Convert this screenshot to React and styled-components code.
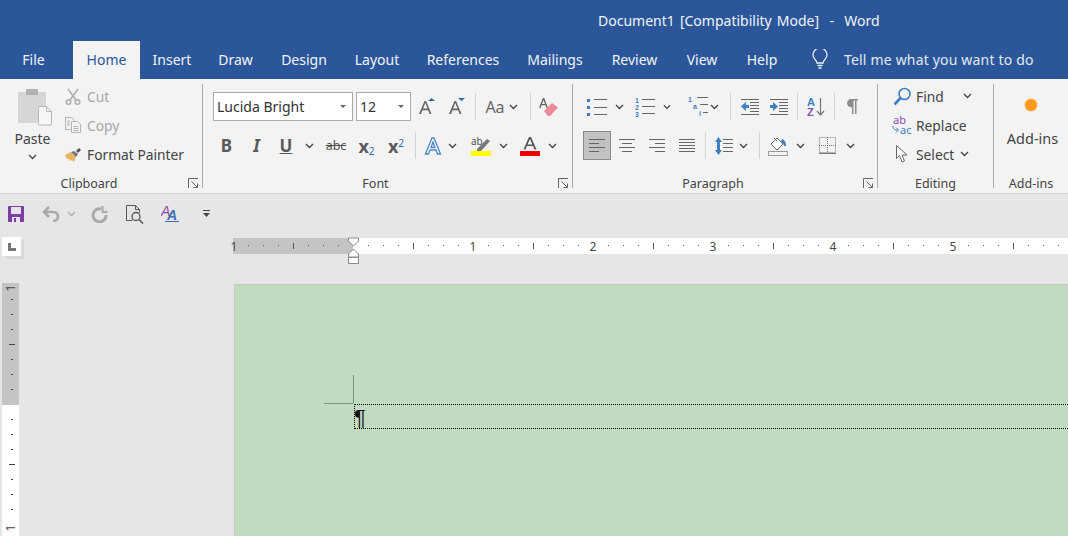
import styled, { createGlobalStyle } from "styled-components";

const Global = createGlobalStyle`
  html, body { margin: 0; padding: 0; overflow: hidden; background: #e6e6e6; }
  * { box-sizing: border-box; }
`;

const Window = styled.div`
  width: 1068px;
  height: 536px;
  overflow: hidden;
  display: flex;
  flex-direction: column;
  background: #e6e6e6;
  color: #444;
  font-family: "Noto Sans", "Open Sans", sans-serif;
  font-size: 14px;
`;

const TitleBar = styled.div`
  height: 41px;
  flex: none;
  display: flex;
  align-items: center;
  padding-left: 598px;
  background: #2b579a;
  color: #f1f4f9;
  white-space: pre;
  word-spacing: 1.5px;
`;

const TabBar = styled.div`
  height: 38px;
  flex: none;
  display: flex;
  background: #2b579a;
`;

const Tab = styled.div`
  width: ${(p) => p.$w}px;
  margin-right: ${(p) => p.$mr || 0}px;
  display: flex;
  align-items: center;
  justify-content: center;
  padding-bottom: 1px;
  background: ${(p) => (p.$active ? "#f3f3f3" : "transparent")};
  color: ${(p) => (p.$active ? "#2b579a" : "#f1f4f9")};
`;

const TellMe = styled.div`
  display: flex;
  align-items: center;
  gap: 16px;
  margin-left: 20px;
  color: #e3e8f1;
  white-space: nowrap;
  letter-spacing: 0.18px;
  padding-bottom: 2px;
`;

const Ribbon = styled.div`
  height: 115px;
  flex: none;
  display: flex;
  padding-top: 5px;
  background: #f3f3f3;
  border-bottom: 1px solid #d2d2d2;
`;

const Group = styled.div`
  width: ${(p) => p.$w}px;
  height: 104px;
  flex: none;
  display: flex;
  flex-direction: column;
  border-right: ${(p) => (p.$last ? "0" : "1px solid #a9a9a9")};
`;

const GroupBody = styled.div`
  flex: 1;
  display: flex;
  flex-direction: ${(p) => (p.$col ? "column" : "row")};
  gap: ${(p) => p.$gap || 0}px;
  padding: ${(p) => p.$pt || 0}px 0 0 ${(p) => p.$pl || 0}px;
`;

const GroupFoot = styled.div`
  height: 16px;
  margin-bottom: -3px;
  display: flex;
  align-items: center;
  font-size: 12.5px;
`;

const GroupLabel = styled.div`
  flex: 1;
  text-align: center;
`;

const Launcher = styled.div`
  width: 24px;
  display: flex;
  justify-content: flex-end;
  padding-right: 3px;
`;

const PasteCol = styled.div`
  width: 65px;
  flex: none;
  display: flex;
  flex-direction: column;
  align-items: center;
  padding-top: 4px;
`;

const PasteText = styled.div`
  margin: 3px 0 5px;
  line-height: 20px;
`;

const SmallCol = styled.div`
  display: flex;
  flex-direction: column;
  gap: 5px;
`;

const SmallRow = styled.div`
  height: 24px;
  display: flex;
  align-items: center;
  font-size: 13.8px;
  color: ${(p) => (p.$off ? "#a6a6a6" : "#444")};
  white-space: nowrap;
`;

const SmallIcon = styled.div`
  width: ${(p) => p.$w}px;
  flex: none;
  display: flex;
  justify-content: ${(p) => (p.$start ? "flex-start" : "center")};
  padding-right: ${(p) => (p.$start ? 0 : 3)}px;
`;

const Row = styled.div`
  height: 29px;
  display: flex;
  align-items: center;
`;

const Combo = styled.div`
  width: ${(p) => p.$w}px;
  height: 29px;
  margin-right: ${(p) => p.$mr || 0}px;
  display: flex;
  align-items: center;
  justify-content: space-between;
  padding: 0 6px 0 3px;
  background: #fff;
  border: 1px solid #ababab;
  color: #333;
  white-space: nowrap;
`;

const ComboArrow = styled.span`
  width: 0;
  height: 0;
  border-left: 3px solid transparent;
  border-right: 3px solid transparent;
  border-top: 3px solid #666;
`;

const Tool = styled.div`
  width: ${(p) => p.$w}px;
  height: 29px;
  flex: none;
  margin-left: ${(p) => p.$ml || 0}px;
  display: flex;
  align-items: center;
  justify-content: center;
  background: ${(p) => (p.$on ? "#c2c2c2" : "transparent")};
  border: ${(p) => (p.$on ? "1px solid #8a8a8a" : "0")};
`;

const FaceLetter = styled.span`
  font-size: 17px;
  color: #5a5a5a;
  font-weight: 700;
  font-style: ${(p) => (p.$i ? "italic" : "normal")};
  text-decoration: ${(p) => (p.$u ? "underline" : "none")};
`;

const CaseLetter = styled.span`
  font-size: 16px;
  color: #666;
`;

const Strike = styled.span`
  font-size: 12.5px;
  color: #555;
  text-decoration: line-through;
`;

const Script = styled.span`
  font-size: 18px;
  font-weight: 700;
  color: #5a5a5a;
  line-height: 20px;
  sub, sup { font-size: 10px; font-weight: 400; color: #2b6cb0; line-height: 0; }
  sub { vertical-align: -2px; }
  sup { vertical-align: 6px; }
`;

const Sep = styled.div`
  width: 1px;
  height: ${(p) => p.$h || 27}px;
  flex: none;
  margin-left: ${(p) => p.$ml || 0}px;
  background: #d4d4d4;
`;

const AddIns = styled.div`
  flex: 1;
  display: flex;
  flex-direction: column;
  align-items: center;
  padding-top: 15px;
`;

const Dot = styled.div`
  width: 12px;
  height: 12px;
  border-radius: 50%;
  background: #ff9a1e;
  box-shadow: 0 0 2px #ffb255;
`;

const AddInsText = styled.div`
  margin: 17px 0 0 3px;
  line-height: 20px;
  font-size: 14.5px;
`;

const Qat = styled.div`
  height: 40px;
  flex: none;
  display: flex;
  align-items: center;
  padding-left: 7px;
`;

const RulerRow = styled.div`
  display: flex;
  flex: none;
  padding-top: 3px;
  padding-left: 2px;
`;

const Corner = styled.div`
  width: 19px;
  height: 19px;
  flex: none;
  display: flex;
  align-items: center;
  justify-content: center;
  background: #fff;
  box-shadow: 3px 3px 0 #d9d9d9;
`;

const HRulerBox = styled.div`
  margin: 1px 0 0 212px;
  width: 835px;
  height: 26px;
  flex: none;
`;

const DocRow = styled.div`
  display: flex;
  flex: 1;
  min-height: 0;
  margin-top: 19px;
  padding-left: 2px;
`;

const VRulerBox = styled.div`
  width: 17px;
  flex: none;
`;

const Page = styled.div`
  position: relative;
  flex: 1;
  margin: 1px 0 0 215px;
  padding: 119px 0 0 119px;
  background: #c0dbbf;
  border-top: 1px solid #c4c8c4;
  border-left: 1px solid #c4c8c4;
`;

const CropV = styled.div`
  position: absolute;
  left: 118px;
  top: 90px;
  width: 1px;
  height: 28px;
  background: #7f8f7f;
`;

const CropH = styled.div`
  position: absolute;
  left: 89px;
  top: 118px;
  width: 29px;
  height: 1px;
  background: #7f8f7f;
`;

const TextLine = styled.div`
  height: 25px;
  display: flex;
  border: 1px dotted #000;
  border-right: 0;
  overflow: hidden;
`;

const Pilcrow = styled.span`
  margin-left: -1px;
  font-family: "Liberation Sans", sans-serif;
  font-size: 22px;
  line-height: 25px;
  color: #111;
`;

const Chev = ({ c = "#444" }) => (
  <svg width="9" height="6" viewBox="0 0 9 6"><path d="M1 1l3.5 3.5L8 1" fill="none" stroke={c} strokeWidth="1.3" /></svg>
);

const LauncherIcon = () => (
  <svg width="11" height="11" viewBox="0 0 11 11" fill="none" stroke="#666">
    <path d="M.5 10V.5H10M9.5 9.5L3.5 3.5M9.5 5.5v4h-4" />
  </svg>
);

const Lines = ({ x, ys, w, c = "#666" }) => ys.map((y, i) => (
  <rect key={i} x={x} y={y} width={Array.isArray(w) ? w[i] : w} height="1" fill={c} />
));

const PasteIcon = () => (
  <svg width="36" height="38" viewBox="0 0 36 38" style={{ marginLeft: 7 }}>
    <rect x="0" y="4" width="28" height="31" rx="1" fill="#d8d5d5" />
    <rect x="8" y="1" width="12" height="6" rx="1" fill="#b5b2b2" />
    <path d="M20.5 18.500h8l5 5v13.500h-13z" fill="#f6f6f6" stroke="#b8b8b8" />
    <path d="M28.500 18.500v5h5" fill="none" stroke="#b8b8b8" />
  </svg>
);

const CutIcon = () => (
  <svg width="16" height="17" viewBox="0 0 16 17" fill="none" stroke="#b0b0b0" strokeWidth="1.6">
    <path d="M3 1l8 11M13 1L5 12" /><circle cx="3.500" cy="14" r="2.300" /><circle cx="12.500" cy="14" r="2.300" />
  </svg>
);

const CopyIcon = () => (
  <svg width="17" height="16" viewBox="0 0 17 16" fill="#f3f3f3" stroke="#b5b5b5">
    <path d="M.5.5h6l3 3v9h-9z" /><path d="M6.500 4.500h6l3 3v8h-9z" />
    <path d="M8.500 9.500h5M8.500 11.500h5M8.500 13.500h5M2 4h3M2 6h3M2 8h3" />
  </svg>
);

const PainterIcon = () => (
  <svg width="18" height="15" viewBox="0 0 18 15">
    <path d="M0 8l6-3 5 5-2 5-2-2-2 1-1-2-2 0z" fill="#e8b565" />
    <path d="M6 5l5 5 2-3-4-3z" fill="#777" />
    <path d="M11 4l3-3 2 2-3 3z" fill="#555" />
  </svg>
);

const GrowIcon = ({ down }) => (
  <svg width="20" height="20" viewBox="0 0 20 20">
    <path d="M1 17L6.500 4h1.600L13.500 17h-1.900l-1.500-3.800H4.500L3 17zM5.100 11.600h4.400L7.300 6z" fill="#666" />
    <path d={down ? "M10 1h7l-3.500 3z" : "M10 4h7l-3.500-3z"} fill="#2b6cb0" />
  </svg>
);

const EraserIcon = () => (
  <svg width="20" height="20" viewBox="0 0 20 20">
    <path d="M0 11L3.800 1h1.400L9 11H7.500l-1-2.800h-4L1.500 11zM3 7h3L4.500 3z" fill="#666" />
    <path d="M5 14l8-8 6 4.500-8 8.500H9z" fill="#ea8a96" />
  </svg>
);

const TextEffect = () => (
  <svg width="18" height="18" viewBox="0 0 18 18">
    <path d="M1.500 17L8 1h2l6.500 16h-3l-1.500-4H6l-1.500 4zM7 10.500h4L9 5z" fill="#fff" stroke="#4a86c8" strokeWidth="1.300" />
  </svg>
);

const HighlightIcon = () => (
  <svg width="21" height="20" viewBox="0 0 21 20">
    <text x="0" y="9" fontFamily="Noto Sans, sans-serif" fontSize="10" fill="#555">ab</text>
    <path d="M6 13L16 3l3 2-9 10-4 0z" fill="#777" />
    <rect x="0" y="15" width="20" height="5" fill="#ffff00" />
  </svg>
);

const ColorIcon = () => (
  <svg width="20" height="20" viewBox="0 0 20 20">
    <path d="M3.500 13.500L9 1h2l5.500 12.500h-2l-1.400-3.500H6.900l-1.400 3.500zM7.600 8.500h4.800L10 3z" fill="#555" />
    <rect x="0" y="15" width="20" height="5" fill="#f00000" />
  </svg>
);

const Blue = "#3f7fc1";

const BulletIcon = () => (
  <svg width="20" height="18" viewBox="0 0 20 18">
    {[2, 9, 16].map((y) => <rect key={y} x="0" y={y - 1} width="3" height="3" fill={Blue} />)}
    <Lines x={7} ys={[1, 9, 16]} w={13} />
  </svg>
);

const NumberIcon = () => (
  <svg width="20" height="20" viewBox="0 0 20 20" fontFamily="Liberation Sans, sans-serif" fontSize="7" fontWeight="700" fill={Blue}>
    <text x="0" y="6">1</text><text x="0" y="13">2</text><text x="0" y="20">3</text>
    <Lines x={7} ys={[2, 9, 16]} w={13} />
  </svg>
);

const MultiIcon = () => (
  <svg width="20" height="21" viewBox="0 0 20 21" fontFamily="Liberation Sans, sans-serif" fontSize="7" fontWeight="700" fill={Blue}>
    <text x="0" y="6">1</text><text x="5" y="13">a</text><text x="11" y="20">i</text>
    <Lines x={9} ys={[1]} w={11} /><Lines x={12} ys={[8]} w={8} /><Lines x={15} ys={[16]} w={5} />
  </svg>
);

const IndentIcon = ({ right }) => (
  <svg width="18" height="16" viewBox="0 0 18 16">
    <Lines x={0} ys={[0, 15]} w={18} />
    <Lines x={9} ys={[3, 6, 9, 12]} w={9} />
    <path d={right ? "M0 6h3V3l5 4.500-5 4.500V9H0z" : "M8 6H5V3L0 7.500 5 12V9h3z"} fill={Blue} />
  </svg>
);

const SortIcon = () => (
  <svg width="18" height="20" viewBox="0 0 18 20" fontFamily="Liberation Sans, sans-serif" fontSize="11" fontWeight="700">
    <text x="0" y="9" fill={Blue}>A</text><text x="0" y="19" fill="#8a4fb0">Z</text>
    <path d="M13.500 1v17M10 14l3.500 4 3.500-4" fill="none" stroke="#777" strokeWidth="1.200" />
  </svg>
);

const ParaIcon = () => (
  <svg width="11" height="15" viewBox="0 0 11 15" fill="#8c8c8c">
    <path d="M4 0h7v1.500H9.500V15H8V1.500H6.500V15H5V8.500C2 8.500 0 6.500 0 4.300 0 2 2 0 4 0z" />
  </svg>
);

const AlignIcon = ({ kind }) => {
  const rows = kind === "left" ? [[0, 16], [0, 10], [0, 16], [0, 10]]
    : kind === "center" ? [[0, 16], [3, 10], [0, 16], [3, 10]]
    : kind === "right" ? [[0, 16], [6, 10], [0, 16], [6, 10]]
    : [[0, 16], [0, 16], [0, 16], [0, 16], [0, 16]];
  const step = kind === "just" ? 3 : 4;
  return (
    <svg width="16" height="14" viewBox="0 0 16 14">
      {rows.map(([x, l], i) => <rect key={i} x={x} y={i * step} width={l} height="1" fill="#666" />)}
    </svg>
  );
};

const SpacingIcon = () => (
  <svg width="18" height="18" viewBox="0 0 18 18">
    <path d="M3.500 0L7 5H5v8h2l-3.500 5L0 13h2V5H0z" fill={Blue} />
    <Lines x={8} ys={[2, 6, 10, 14]} w={10} />
  </svg>
);

const ShadeIcon = () => (
  <svg width="20" height="20" viewBox="0 0 20 20">
    <path d="M3 8l6-6 6 6-6 6z" fill="#fff" stroke="#666" />
    <path d="M6 2l3 3" stroke="#666" />
    <path d="M14 3c3 1 4 4 4 7h-2c0-2-1-3-3-4z" fill={Blue} />
    <rect x=".5" y="15.500" width="19" height="4" fill="#f3f3f3" stroke="#999" />
  </svg>
);

const BorderIcon = () => (
  <svg width="17" height="17" viewBox="0 0 17 17" fill="none" stroke="#777" strokeDasharray="1 1">
    <rect x=".5" y=".5" width="16" height="15" />
    <path d="M8.500 0v16M0 8.500h17" />
    <path d="M0 16.500h17" strokeDasharray="none" />
  </svg>
);

const FindIcon = () => (
  <svg width="19" height="19" viewBox="0 0 19 19" fill="none" stroke={Blue}>
    <circle cx="11.500" cy="7" r="5.500" strokeWidth="1.600" />
    <path d="M7.500 11L1.500 17.500" strokeWidth="2.600" />
  </svg>
);

const ReplaceIcon = () => (
  <svg width="21" height="20" viewBox="0 0 21 20" fontFamily="Noto Sans, sans-serif" fontSize="11">
    <text x="1" y="9" fill="#8a4fb0">ab</text>
    <text x="8" y="19" fill={Blue}>ac</text>
    <path d="M1 11c0 3 1 4 5 4M4 12.500L6.500 15 4 17.500" fill="none" stroke={Blue} />
  </svg>
);

const SelectIcon = () => (
  <svg width="12" height="18" viewBox="0 0 12 18">
    <path d="M.5.5v13l3-3 2.500 6.500 2.500-1-2.500-6H11z" fill="#fff" stroke="#666" />
  </svg>
);

const BulbIcon = () => (
  <svg width="16" height="20" viewBox="0 0 16 20" fill="none" stroke="#eef2f8" strokeWidth="1.300">
    <path d="M5 14c0-3-4-4-4-8a7 7 0 0 1 14 0c0 4-4 5-4 8z" />
    <path d="M5.500 16.500h5M6.500 19h3" />
  </svg>
);

const SaveIcon = () => (
  <svg width="16" height="16" viewBox="0 0 16 16">
    <rect width="16" height="16" rx="1" fill="#7b3fa3" />
    <rect x="3" y="1" width="10" height="7" fill="#e9e3ee" />
    <rect x="4" y="11" width="8" height="5" fill="#e9e3ee" />
    <rect x="6" y="12" width="2" height="4" fill="#7b3fa3" />
  </svg>
);

const UndoIcon = () => (
  <svg width="18" height="16" viewBox="0 0 18 16" fill="none" stroke="#aaa" strokeWidth="2.600">
    <path d="M2 6h9c3 0 5 2 5 4.500S14 15 11 15" /><path d="M7 1L2 6l5 5" />
  </svg>
);

const RepeatIcon = () => (
  <svg width="17" height="17" viewBox="0 0 17 17" fill="none" stroke="#aaa" strokeWidth="3">
    <path d="M10 3A6.500 6.500 0 1 0 15 9" /><path d="M11.500 0v6h5" strokeWidth="2" />
  </svg>
);

const PreviewIcon = () => (
  <svg width="19" height="19" viewBox="0 0 19 19" fill="none" stroke="#555">
    <path d="M.5.500h9l4 4v3M.5.500v15h6" /><path d="M9.500.500v4h4" />
    <circle cx="10" cy="11.500" r="4" strokeWidth="1.300" /><path d="M13 14.500l4 4" strokeWidth="1.600" />
  </svg>
);

const StyleIcon = () => (
  <svg width="18" height="18" viewBox="0 0 18 18" fontFamily="Liberation Sans, sans-serif" fontStyle="italic">
    <text x="0" y="11" fontSize="14" fill="#8a4fb0">A</text>
    <text x="6" y="15" fontSize="14" fontWeight="700" fill="#3f6fae">A</text>
    <rect x="4" y="16" width="14" height="1" fill="#3f6fae" />
  </svg>
);

const MoreIcon = () => (
  <svg width="7" height="8" viewBox="0 0 7 8" fill="#444">
    <rect x="0" y="0" width="7" height="1" /><path d="M0 3h7L3.500 7z" />
  </svg>
);

const TabStopIcon = () => (
  <svg width="8" height="8" viewBox="0 0 8 8"><path d="M0 0h3v5h5v3H0z" fill="#777" /></svg>
);

const HRuler = () => {
  const ticks = [];
  for (let x = 0; x <= 835; x += 15) {
    const rel = x - 120;
    if (rel % 120 === 0) continue;
    const long = rel % 60 === 0;
    ticks.push(<rect key={x} x={x} y={long ? 5 : 7} width="1" height={long ? 6 : 1} fill="#555" />);
  }
  return (
    <svg width="835" height="26" viewBox="0 0 835 26" overflow="visible">
      <rect width="120" height="16" fill="#c4c4c4" />
      <rect x="120" width="715" height="16" fill="#fff" />
      {ticks}
      {[1, 240, 360, 480, 600, 720].map((x, i) => (
        <text key={x} x={x} y="13" textAnchor="middle" fontSize="12" fontFamily="Noto Sans, sans-serif" fill="#444">
          {[1, 1, 2, 3, 4, 5][i]}
        </text>
      ))}
      <path d="M115.500 0h10v3l-5 5-5-5zM115.500 16l5-5 5 5v3h-10z" fill="#fff" stroke="#8a8a8a" />
      <rect x="115.500" y="19.500" width="10" height="6" fill="#fff" stroke="#8a8a8a" />
    </svg>
  );
};

const VRuler = () => {
  const marks = [];
  for (let y = 16; y < 253; y += 15) {
    if (y === 121 || y === 241) continue;
    const long = y === 61 || y === 181;
    marks.push(<rect key={y} x={long ? 7 : 9} y={y} width={long ? 6 : 2} height="1" fill="#444" />);
  }
  return (
    <svg width="17" height="253" viewBox="0 0 17 253">
      <rect width="17" height="122" fill="#c4c4c4" />
      <rect y="122" width="17" height="131" fill="#fff" />
      {marks}
      {[5, 245].map((y) => (
        <text key={y} x="10" y={y} transform={`rotate(-90 10 ${y})`} textAnchor="middle" dominantBaseline="middle" fontSize="13" fontFamily="Noto Sans, sans-serif" fill="#444">1</text>
      ))}
    </svg>
  );
};

const tabs = [
  ["File", 67, false, 6], ["Home", 67, true], ["Insert", 64], ["Draw", 63], ["Design", 74], ["Layout", 72],
  ["References", 100], ["Mailings", 84], ["Review", 75], ["View", 60], ["Help", 60],
];

const App = () => (
  <Window>
    <Global />
    <TitleBar>Document1 [Compatibility Mode]  -  Word</TitleBar>
    <TabBar>
      {tabs.map(([name, w, active, mr]) => (
        <Tab key={name} $w={w} $active={active} $mr={mr}>{name}</Tab>
      ))}
      <TellMe><BulbIcon />Tell me what you want to do</TellMe>
    </TabBar>

    <Ribbon>
      <Group $w={203}>
        <GroupBody>
          <PasteCol>
            <PasteIcon />
            <PasteText>Paste</PasteText>
            <Chev />
          </PasteCol>
          <SmallCol>
            <SmallRow $off><SmallIcon $w={22} $start><CutIcon /></SmallIcon>Cut</SmallRow>
            <SmallRow $off><SmallIcon $w={22} $start><CopyIcon /></SmallIcon>Copy</SmallRow>
            <SmallRow><SmallIcon $w={22} $start><PainterIcon /></SmallIcon>Format Painter</SmallRow>
          </SmallCol>
        </GroupBody>
        <GroupFoot>
          <GroupLabel>Clipboard</GroupLabel>
          <Launcher><LauncherIcon /></Launcher>
        </GroupFoot>
      </Group>

      <Group $w={370}>
        <GroupBody $col $pt={8} $pl={10} $gap={10}>
          <Row>
            <Combo $w={140} $mr={3}>Lucida Bright<ComboArrow /></Combo>
            <Combo $w={55}>12<ComboArrow /></Combo>
            <Tool $w={30} $ml={2}><GrowIcon /></Tool>
            <Tool $w={29}><GrowIcon down /></Tool>
            <Sep $ml={3} />
            <Tool $w={22} $ml={8}><CaseLetter>Aa</CaseLetter></Tool>
            <Tool $w={12} $ml={1}><Chev /></Tool>
            <Sep $ml={11} />
            <Tool $w={30} $ml={3}><EraserIcon /></Tool>
          </Row>
          <Row>
            <Tool $w={27}><FaceLetter>B</FaceLetter></Tool>
            <Tool $w={33}><FaceLetter $i>I</FaceLetter></Tool>
            <Tool $w={26}><FaceLetter $u>U</FaceLetter></Tool>
            <Tool $w={20}><Chev /></Tool>
            <Tool $w={34}><Strike>abc</Strike></Tool>
            <Tool $w={27}><Script>x<sub>2</sub></Script></Tool>
            <Tool $w={32}><Script>x<sup>2</sup></Script></Tool>
            <Sep $ml={3} />
            <Tool $w={26} $ml={4}><TextEffect /></Tool>
            <Tool $w={12}><Chev /></Tool>
            <Tool $w={34} $ml={6}><HighlightIcon /></Tool>
            <Tool $w={10}><Chev /></Tool>
            <Tool $w={28} $ml={8}><ColorIcon /></Tool>
            <Tool $w={16}><Chev /></Tool>
          </Row>
        </GroupBody>
        <GroupFoot>
          <GroupLabel>Font</GroupLabel>
          <Launcher><LauncherIcon /></Launcher>
        </GroupFoot>
      </Group>

      <Group $w={305}>
        <GroupBody $col $pt={8} $pl={10} $gap={10}>
          <Row>
            <Tool $w={28}><BulletIcon /></Tool>
            <Tool $w={16}><Chev /></Tool>
            <Tool $w={36}><NumberIcon /></Tool>
            <Tool $w={8}><Chev /></Tool>
            <Tool $w={28} $ml={13}><MultiIcon /></Tool>
            <Tool $w={12} $ml={-4}><Chev /></Tool>
            <Sep $ml={10} />
            <Tool $w={28} $ml={5}><IndentIcon /></Tool>
            <Tool $w={30}><IndentIcon right /></Tool>
            <Sep $ml={3} />
            <Tool $w={30} $ml={3}><SortIcon /></Tool>
            <Sep $ml={3} />
            <Tool $w={30} $ml={2}><ParaIcon /></Tool>
          </Row>
          <Row>
            <Tool $w={28} $on><AlignIcon kind="left" /></Tool>
            <Tool $w={30} $ml={1}><AlignIcon kind="center" /></Tool>
            <Tool $w={30}><AlignIcon kind="right" /></Tool>
            <Tool $w={30}><AlignIcon kind="just" /></Tool>
            <Sep $ml={3} />
            <Tool $w={28} $ml={4}><SpacingIcon /></Tool>
            <Tool $w={10}><Chev /></Tool>
            <Sep $ml={11} />
            <Tool $w={30} $ml={3}><ShadeIcon /></Tool>
            <Tool $w={14}><Chev /></Tool>
            <Tool $w={24} $ml={8}><BorderIcon /></Tool>
            <Tool $w={14} $ml={4}><Chev /></Tool>
          </Row>
        </GroupBody>
        <GroupFoot>
          <GroupLabel>Paragraph</GroupLabel>
          <Launcher><LauncherIcon /></Launcher>
        </GroupFoot>
      </Group>

      <Group $w={116}>
        <GroupBody $pl={13}>
          <SmallCol>
            <SmallRow><SmallIcon $w={25}><FindIcon /></SmallIcon>Find<Tool $w={12} $ml={18}><Chev /></Tool></SmallRow>
            <SmallRow><SmallIcon $w={25}><ReplaceIcon /></SmallIcon>Replace</SmallRow>
            <SmallRow><SmallIcon $w={25}><SelectIcon /></SmallIcon>Select<Tool $w={12} $ml={4}><Chev /></Tool></SmallRow>
          </SmallCol>
        </GroupBody>
        <GroupFoot><GroupLabel>Editing</GroupLabel></GroupFoot>
      </Group>

      <Group $last $w={74}>
        <AddIns>
          <Dot />
          <AddInsText>Add-ins</AddInsText>
        </AddIns>
        <GroupFoot><GroupLabel>Add-ins</GroupLabel></GroupFoot>
      </Group>
    </Ribbon>

    <Qat>
      <Tool $w={18}><SaveIcon /></Tool>
      <Tool $w={22} $ml={15}><UndoIcon /></Tool>
      <Tool $w={12} $ml={3}><Chev c="#aaa" /></Tool>
      <Tool $w={20} $ml={12}><RepeatIcon /></Tool>
      <Tool $w={22} $ml={15}><PreviewIcon /></Tool>
      <Tool $w={22} $ml={13}><StyleIcon /></Tool>
      <Tool $w={10} $ml={20}><MoreIcon /></Tool>
    </Qat>

    <RulerRow>
      <Corner><TabStopIcon /></Corner>
      <HRulerBox><HRuler /></HRulerBox>
    </RulerRow>

    <DocRow>
      <VRulerBox><VRuler /></VRulerBox>
      <Page>
        <CropV />
        <CropH />
        <TextLine><Pilcrow>¶</Pilcrow></TextLine>
      </Page>
    </DocRow>
  </Window>
);

export default App;
